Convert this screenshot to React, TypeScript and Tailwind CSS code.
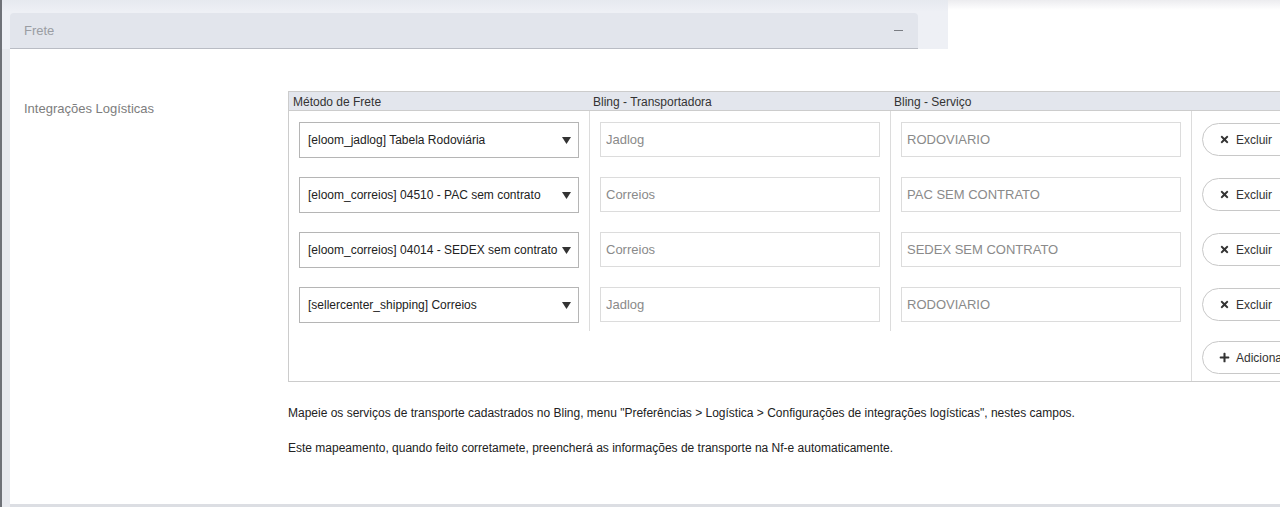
import { FaTimes, FaPlus } from "react-icons/fa";

interface Linha {
    metodo: string;
    transportadora: string;
    servico: string;
}

const linhas: Linha[] = [
    { metodo: "[eloom_jadlog] Tabela Rodoviária", transportadora: "Jadlog", servico: "RODOVIARIO" },
    { metodo: "[eloom_correios] 04510 - PAC sem contrato", transportadora: "Correios", servico: "PAC SEM CONTRATO" },
    { metodo: "[eloom_correios] 04014 - SEDEX sem contrato", transportadora: "Correios", servico: "SEDEX SEM CONTRATO" },
    { metodo: "[sellercenter_shipping] Correios", transportadora: "Jadlog", servico: "RODOVIARIO" },
];

function Select({ value }: { value: string }) {
    return (
        <div className="relative h-[36px] w-[280px]">
            <select
                defaultValue={value}
                className="h-full w-full appearance-none border border-[#b5b5b5] bg-white pl-[8px] pr-[20px] text-[12px] text-[#222] outline-none"
            >
                <option>{value}</option>
            </select>
            <svg className="pointer-events-none absolute right-[8px] top-[15px]" width="9" height="7" viewBox="0 0 9 7">
                <path d="M0 0h9L4.5 7z" fill="#333" />
            </svg>
        </div>
    );
}

function Campo({ value }: { value: string }) {
    return (
        <input
            readOnly
            value={value}
            className="h-[35px] w-[280px] border border-[#dcdcdc] bg-white pl-[5px] text-[13px] text-[#8a8a8a] outline-none"
        />
    );
}

function Botao({ children }: { children: React.ReactNode }) {
    return (
        <button className="flex h-[33px] w-[96px] items-center gap-[6px] rounded-full border border-[#c8c8c8] bg-white pl-[16px] text-[12px] text-[#333]">
            {children}
        </button>
    );
}

export default function App() {
    return (
        <div className="flex h-[507px] w-[1280px] flex-col overflow-hidden border-l-2 border-[#6f7278] bg-white font-['Liberation_Sans',Arial,sans-serif]">
            {/* Topo */}
            <div className="flex h-[49px] shrink-0">
                <div className="w-[946px] shrink-0 bg-gradient-to-b from-[#e6e9ef] to-[#eef0f5] to-[12px] pl-[8px] pt-[13px]">
                    <div className="flex h-[36px] w-[908px] items-center justify-between rounded-t-[4px] border-b border-[#b9bcc4] bg-[#e2e5ec] px-[14px]">
                        <span className="text-[13px] text-[#9a9da3]">Frete</span>
                        <span className="mr-[1px] h-[1px] w-[9px] bg-[#7a7d83]" />
                    </div>
                </div>
                <div className="flex-1 bg-gradient-to-b from-[#ececef] to-white to-[10px]" />
            </div>

            {/* Corpo */}
            <div className="flex flex-1">
                <div className="w-[8px] shrink-0 bg-[#e8eaef]" />
                <div className="flex min-w-0 flex-1 border-b-[3px] border-[#dcdee3] bg-white">
                    <div className="w-[278px] shrink-0 pl-[14px] pt-[52px] text-[13px] leading-[16px] text-[#7d7d7d]">
                        Integrações Logísticas
                    </div>

                    <div className="shrink-0 pt-[42px]">
                        <div className="w-[1020px] border border-[#cccccc]">
                            {/* Cabeçalho */}
                            <div className="flex h-[19px] items-center border-b border-[#cccccc] bg-[#e3e6ed] pt-[1px] text-[12px] text-[#333]">
                                <div className="w-[301px] pl-[4px]">Método de Frete</div>
                                <div className="w-[301px] pl-[3px]">Bling - Transportadora</div>
                                <div className="w-[300px] pl-[3px]">Bling - Serviço</div>
                            </div>

                            <div className="flex">
                                <div className="w-[902px]">
                                    {linhas.map((l, i) => (
                                        <div key={i} className="flex h-[55px]">
                                            <div className="w-[301px] border-r border-[#dcdcdc] pl-[10px] pt-[11px]">
                                                <Select value={l.metodo} />
                                            </div>
                                            <div className="w-[301px] border-r border-[#dcdcdc] pl-[10px] pt-[11px]">
                                                <Campo value={l.transportadora} />
                                            </div>
                                            <div className="w-[300px] pl-[10px] pt-[11px]">
                                                <Campo value={l.servico} />
                                            </div>
                                        </div>
                                    ))}
                                    <div className="h-[50px]" />
                                </div>

                                <div className="flex-1 border-l border-[#dcdcdc]">
                                    {linhas.map((_, i) => (
                                        <div key={i} className="h-[55px] pl-[10px] pt-[12px]">
                                            <Botao>
                                                <FaTimes size={11} />
                                                Excluir
                                            </Botao>
                                        </div>
                                    ))}
                                    <div className="h-[50px] pl-[10px] pt-[10px]">
                                        <Botao>
                                            <FaPlus size={11} />
                                            Adicionar
                                        </Botao>
                                    </div>
                                </div>
                            </div>
                        </div>

                        <p className="mt-[22px] text-[12px] text-[#222]">
                            Mapeie os serviços de transporte cadastrados no Bling, menu "Preferências &gt; Logística &gt; Configurações de integrações logísticas", nestes campos.
                        </p>
                        <p className="mt-[17px] text-[12px] text-[#222]">
                            Este mapeamento, quando feito corretamete, preencherá as informações de transporte na Nf-e automaticamente.
                        </p>
                    </div>
                </div>
            </div>
        </div>
    );
}
